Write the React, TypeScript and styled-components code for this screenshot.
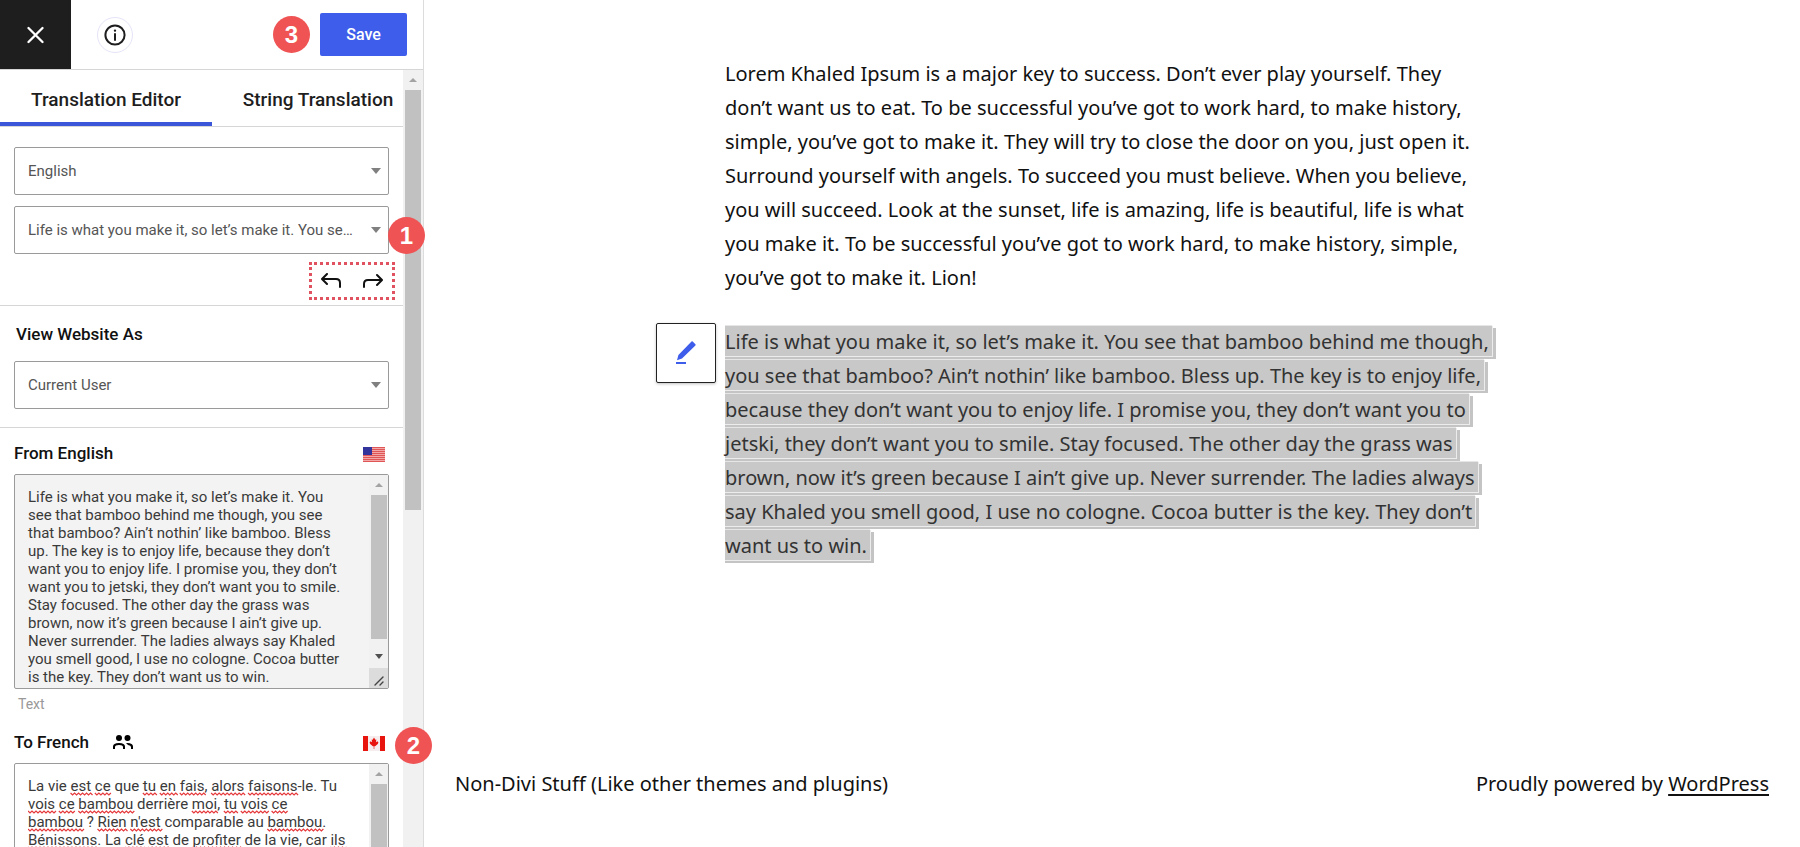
import React, { useLayoutEffect, useState } from "react";
import styled, { createGlobalStyle, css } from "styled-components";

const GlobalStyle = createGlobalStyle`
  *, *::before, *::after { box-sizing: border-box; }
  body { margin: 0; background: #fff; font-family: Roboto, "Liberation Sans", sans-serif; }
  button, select, textarea { font-family: inherit; }
`;

const Page = styled.div`
  display: flex;
  height: 100vh;
  overflow: hidden;
`;

/* ---------- sidebar ---------- */

const Sidebar = styled.aside`
  position: relative;
  flex: 0 0 424px;
  min-width: 0;
  display: flex;
  flex-direction: column;
  border-right: 1px solid #dcdcdc;
`;

const TopBar = styled.header`
  flex: none;
  display: flex;
  align-items: center;
  height: 70px;
  padding-right: 16px;
  border-bottom: 1px solid #d6d6d6;
`;

const CloseButton = styled.button`
  display: flex;
  align-items: center;
  justify-content: center;
  align-self: stretch;
  width: 71px;
  border: 0;
  background: #1e1e1e;
  color: #fff;
`;

const InfoButton = styled.button`
  display: flex;
  align-items: center;
  justify-content: center;
  width: 36px;
  height: 36px;
  margin: 0 auto 0 26px;
  padding: 0;
  border: 1px solid #e4e4f8;
  border-radius: 50%;
  background: #fff;
  color: #1e1e1e;
`;

const SaveButton = styled.button`
  width: 87px;
  height: 43px;
  border: 0;
  border-radius: 2px;
  background: #3e5dea;
  color: #fff;
  font-size: 16px;
  font-weight: 500;
`;

const Badge = styled.span`
  display: flex;
  align-items: center;
  justify-content: center;
  width: 37px;
  height: 37px;
  border-radius: 50%;
  background: #ef5354;
  color: #fff;
  font: 700 24px/1 "Liberation Sans", sans-serif;
`;

const SaveBadge = styled(Badge)`
  margin-right: 10px;
`;

const SelectBadge = styled(Badge)`
  position: absolute;
  left: 374px;
  top: 11px;
`;

const FieldBadge = styled(Badge)`
  position: absolute;
  left: 395px;
  top: 10px;
`;

const ScrollArea = styled.div`
  flex: 1;
  min-height: 0;
  display: flex;
`;

const Panel = styled.div`
  flex: 1;
  min-width: 0;
`;

const Tabs = styled.nav`
  display: flex;
  overflow: hidden;
  border-bottom: 1px solid #d6d6d6;
`;

const Tab = styled.button<{ $active?: boolean }>`
  flex: 0 0 212px;
  height: 56px;
  padding: 6px 0 0;
  border: 0;
  border-bottom: 4px solid ${(p) => (p.$active ? "#3b56d9" : "transparent")};
  background: none;
  color: #1e1e1e;
  font-size: 19px;
  font-weight: 500;
`;

const Section = styled.section<{ $roomy?: boolean }>`
  padding: 20px 14px ${(p) => (p.$roomy ? 7 : 0)}px;
  border-bottom: 1px solid #d6d6d6;
`;

const SelectRow = styled.div`
  position: relative;
  margin-bottom: 11px;
`;

const Select = styled.select`
  display: block;
  width: 100%;
  height: 48px;
  padding: 0 30px 0 13px;
  border: 1px solid #9a9a9a;
  border-radius: 2px;
  background: #fff;
  color: #555;
  font-size: 15px;
  text-overflow: ellipsis;
  appearance: none;
`;

const Caret = styled.span`
  position: absolute;
  right: 8px;
  top: 21px;
  border: 5px solid transparent;
  border-top: 6px solid #808080;
  border-bottom: 0;
  pointer-events: none;
`;

const HistoryRow = styled.div`
  display: flex;
  justify-content: space-between;
  align-items: center;
  width: 86px;
  height: 38px;
  margin: -3px -6px 5px auto;
  padding: 0 9px;
  border: 3px dotted #e0525f;
`;

const IconButton = styled.button`
  display: flex;
  padding: 0;
  border: 0;
  background: none;
  color: #111;
`;

const SectionLabel = styled.label`
  display: block;
  margin: 0 0 19px 2px;
  color: #111;
  font-size: 17px;
  font-weight: 500;
  line-height: 16px;
`;

const Field = styled.div`
  position: relative;
  padding: 12px 14px 0;
`;

const FieldHead = styled.div`
  display: flex;
  align-items: center;
  height: 25px;
  margin-bottom: 9px;
`;

const FieldLabel = styled.label`
  color: #111;
  font-size: 17px;
  font-weight: 500;
`;

const TextFrame = styled.div<{ $muted?: boolean }>`
  display: flex;
  height: 215px;
  border: 1px solid #9a9a9a;
  border-radius: 2px;
  background: ${(p) => (p.$muted ? "#f3f3f3" : "#fff")};
`;

const TextWrap = styled.div`
  position: relative;
  flex: 1;
`;

const TextArea = styled.textarea`
  display: block;
  width: 100%;
  height: 100%;
  padding: 13px 8px 0 13px;
  border: 0;
  background: transparent;
  color: #3a3a3a;
  font-size: 15px;
  line-height: 18px;
  resize: none;
  overflow: hidden;
  outline: 0;
`;

const Squiggles = styled.svg`
  position: absolute;
  left: 13px;
  top: 13px;
  pointer-events: none;
`;

const Hint = styled.p`
  margin: 6px 0 4px 4px;
  color: #999;
  font-size: 14px;
  line-height: 18px;
`;

const Bar = styled.div<{ $outer?: boolean }>`
  display: flex;
  flex-direction: column;
  align-items: center;
  flex: 0 0 ${(p) => (p.$outer ? 20 : 19)}px;
  background: #f1f1f1;
`;

const Arrow = styled.span<{ $down?: boolean }>`
  margin: ${(p) => (p.$down ? "auto 0 9px" : "8px 0")};
  border: 4px solid transparent;
  ${(p) =>
    p.$down
      ? css`
          border-top: 5px solid #505050;
          border-bottom: 0;
        `
      : css`
          border-bottom: 4px solid #a3a3a3;
          border-top: 0;
        `}
`;

const Thumb = styled.span<{ $share: string }>`
  width: 16px;
  height: ${(p) => p.$share};
  background: #c1c1c1;
`;

const Grip = styled.span`
  display: flex;
  align-items: flex-end;
  justify-content: center;
  width: 100%;
  height: 20px;
  background: #dcdcdc;
`;

const FlagSvg = styled.svg`
  margin: 4px 4px 0 auto;
`;

const PeopleSvg = styled.svg`
  margin-left: 23px;
`;

/* ---------- previewed page ---------- */

const Preview = styled.main`
  flex: 1;
  min-width: 0;
  display: flex;
  flex-direction: column;
  color: #111;
  font: 20px/34px "Noto Sans", "Open Sans", sans-serif;
`;

const Article = styled.article`
  width: 100%;
  max-width: 774px;
  margin: 0 auto;
  padding-top: 57px;
`;

const Paragraph = styled.p`
  position: relative;
  margin: 0 0 30px;
  white-space: nowrap;
`;

const Highlight = styled.span`
  padding: 3px 3px 1px 0;
  background: #c8c8c8;
  box-shadow: inset 0 1px #e6e6e6, 0 1px #ececec, 1px 1px #ececec, 0 3px #c4c4c4, 4px 3px #c4c4c4;
  color: #333;
  -webkit-box-decoration-break: clone;
  box-decoration-break: clone;
`;

const EditButton = styled.button`
  position: absolute;
  left: -69px;
  top: -2px;
  display: flex;
  align-items: center;
  justify-content: center;
  width: 60px;
  height: 60px;
  border: 1px solid #222;
  border-radius: 2px;
  background: #fff;
  box-shadow: 0 1px 3px rgba(0, 0, 0, 0.25);
  color: #3e5dea;
`;

const Footer = styled.footer`
  display: flex;
  justify-content: space-between;
  margin-top: 174px;
  padding: 0 31px;
`;

const FooterLink = styled.a`
  color: inherit;
  text-underline-offset: 3px;
`;

/* ---------- data ---------- */

const LOREM = [
  "Lorem Khaled Ipsum is a major key to success. Don’t ever play yourself. They",
  "don’t want us to eat. To be successful you’ve got to work hard, to make history,",
  "simple, you’ve got to make it. They will try to close the door on you, just open it.",
  "Surround yourself with angels. To succeed you must believe. When you believe,",
  "you will succeed. Look at the sunset, life is amazing, life is beautiful, life is what",
  "you make it. To be successful you’ve got to work hard, to make history, simple,",
  "you’ve got to make it. Lion!",
];

const SELECTED = [
  "Life is what you make it, so let’s make it. You see that bamboo behind me though,",
  "you see that bamboo? Ain’t nothin’ like bamboo. Bless up. The key is to enjoy life,",
  "because they don’t want you to enjoy life. I promise you, they don’t want you to",
  "jetski, they don’t want you to smile. Stay focused. The other day the grass was",
  "brown, now it’s green because I ain’t give up. Never surrender. The ladies always",
  "say Khaled you smell good, I use no cologne. Cocoa butter is the key. They don’t",
  "want us to win.",
];

const SOURCE = [
  "Life is what you make it, so let’s make it. You",
  "see that bamboo behind me though, you see",
  "that bamboo? Ain’t nothin’ like bamboo. Bless",
  "up. The key is to enjoy life, because they don’t",
  "want you to enjoy life. I promise you, they don’t",
  "want you to jetski, they don’t want you to smile.",
  "Stay focused. The other day the grass was",
  "brown, now it’s green because I ain’t give up.",
  "Never surrender. The ladies always say Khaled",
  "you smell good, I use no cologne. Cocoa butter",
  "is the key. They don’t want us to win.",
];

/* Words between asterisks are flagged by the spelling check. */
const FRENCH = [
  "La vie *est* *ce* que *tu* *en* *fais*, *alors* *faisons*-le. Tu",
  "*vois* *ce* *bambou* derrière *moi*, *tu* *vois* *ce*",
  "*bambou* ? *Rien* *n'est* comparable au *bambou*.",
  "*Bénissons*. La *clé* *est* de *profiter* de la vie, car *ils*",
];

const lines = (rows: string[]) =>
  rows.map((row, i) => (
    <React.Fragment key={i}>
      {i > 0 && <br />}
      {row}
    </React.Fragment>
  ));

/* ---------- icons ---------- */

const stroke = { fill: "none", stroke: "currentColor", strokeLinecap: "round", strokeLinejoin: "round" } as const;

const CloseIcon = () => (
  <svg width="18" height="18" viewBox="0 0 18 18" {...stroke} strokeWidth="2.3">
    <path d="M1.500 2l14 14M15.500 2l-14 14" />
  </svg>
);

const InfoIcon = () => (
  <svg width="22" height="22" viewBox="0 0 22 22" {...stroke} strokeWidth="2">
    <circle cx="11" cy="11" r="9.6" />
    <path d="M11 10v6" />
    <circle cx="11" cy="6.6" r="0.6" fill="currentColor" strokeWidth="1.2" />
  </svg>
);

const UndoIcon = () => (
  <svg width="20" height="16" viewBox="0 0 20 16" {...stroke} strokeWidth="2">
    <path d="M6 1L1 6l5 5M1.500 6H15q4 0 4 4v4" />
  </svg>
);

const RedoIcon = () => (
  <svg width="20" height="16" viewBox="0 0 20 16" {...stroke} strokeWidth="2">
    <path d="M14 2l5 5-5 5M18.500 7H5Q1 7 1 11v3" />
  </svg>
);

const PeopleIcon = () => (
  <PeopleSvg width="22" height="16" viewBox="0 0 22 16" fill="currentColor">
    <circle cx="7" cy="4" r="3" />
    <circle cx="15.500" cy="4" r="3" />
    <path d="M1 15v-2.500Q1 9 7 9t6 3.500V15h-2v-2q0-2-4-2t-4 2v2z" />
    <path d="M14 9q7-.4 7 3.500V15h-2v-2q0-1.600-3-2z" />
  </PeopleSvg>
);

const PencilIcon = () => (
  <svg width="22" height="24" viewBox="0 0 22 24" fill="currentColor">
    <path d="M16.500.6q.6-.6 1.200 0l2.700 2.700q.6.600 0 1.200L7 17.600 2 19.200 3.400 14z" />
    <rect x="1" y="21" width="10" height="2" />
  </svg>
);

const UsFlag = () => (
  <FlagSvg width="22" height="15" viewBox="0 0 22 15" role="img" aria-label="United States">
    <rect width="22" height="15" fill="#f3a8a8" />
    {[0, 2, 4, 6, 8, 10, 12, 14].map((y) => (
      <rect key={y} y={y} width="22" height="1" fill="#e05656" />
    ))}
    <rect width="9" height="8" fill="#33339c" />
  </FlagSvg>
);

const CanadaFlag = () => (
  <FlagSvg width="22" height="15" viewBox="0 0 22 15" role="img" aria-label="Canada">
    <rect width="22" height="15" fill="#f6eeee" />
    <rect width="5" height="15" fill="#e8150f" />
    <rect x="17" width="5" height="15" fill="#e8150f" />
    <path d="M11 1.500l1.300 2.300 1-.4-.3 2.900 1.500-1 .9 1.200-.6 1.400-2.700 2.300h-.8V13h-.6v-2.800h-.8L7.200 7.900l-.6-1.400.9-1.200 1.500 1-.3-2.900 1 .4z" fill="#e8150f" />
  </FlagSvg>
);

const GripIcon = () => (
  <svg width="12" height="14" viewBox="0 0 12 14" {...stroke} stroke="#444" strokeWidth="1.400">
    <path d="M2 11l8-8M7 11l3-3" />
  </svg>
);

/* ---------- parts ---------- */

function SelectField({ id, label, value }: { id: string; label?: string; value: string }) {
  return (
    <>
      <Select id={id} aria-label={label}>
        <option>{value}</option>
      </Select>
      <Caret />
    </>
  );
}

/* Builds one zigzag from x to x + width, along the bottom of a text line. */
function zigzag(x: number, width: number, y: number) {
  let d = `M${x} ${y}`;
  for (let i = 0; i * 2 < width; i++) d += `l2 ${i % 2 ? -2 : 2}`;
  return d;
}

/* Wavy spelling marks under the flagged words, measured in the field's font. */
function SpellingMarks({ rows }: { rows: string[] }) {
  const [path, setPath] = useState("");
  useLayoutEffect(() => {
    const ctx = document.createElement("canvas").getContext("2d");
    if (!ctx) return;
    ctx.font = '15px Roboto, "Liberation Sans", sans-serif';
    let d = "";
    rows.forEach((row, line) => {
      let before = "";
      row.split("*").forEach((part, i) => {
        if (i % 2) d += zigzag(ctx.measureText(before).width, ctx.measureText(part).width, line * 18 + 16);
        before += part;
      });
    });
    setPath(d);
  }, [rows]);
  return (
    <Squiggles width="335" height="76" aria-hidden="true">
      <path d={path} fill="none" stroke="#e5393b" strokeWidth="1.200" />
    </Squiggles>
  );
}

export default function App() {
  return (
    <Page>
      <GlobalStyle />
      <Sidebar>
        <TopBar>
          <CloseButton aria-label="Close">
            <CloseIcon />
          </CloseButton>
          <InfoButton aria-label="Information">
            <InfoIcon />
          </InfoButton>
          <SaveBadge>3</SaveBadge>
          <SaveButton>Save</SaveButton>
        </TopBar>
        <ScrollArea>
          <Panel>
            <Tabs>
              <Tab $active>Translation Editor</Tab>
              <Tab>String Translation</Tab>
            </Tabs>

            <Section>
              <SelectRow>
                <SelectField id="language" label="Language" value="English" />
              </SelectRow>
              <SelectRow>
                <SelectField id="string" label="String" value={SOURCE.join(" ")} />
                <SelectBadge>1</SelectBadge>
              </SelectRow>
              <HistoryRow>
                <IconButton aria-label="Previous">
                  <UndoIcon />
                </IconButton>
                <IconButton aria-label="Next">
                  <RedoIcon />
                </IconButton>
              </HistoryRow>
            </Section>

            <Section $roomy>
              <SectionLabel htmlFor="viewer">View Website As</SectionLabel>
              <SelectRow>
                <SelectField id="viewer" value="Current User" />
              </SelectRow>
            </Section>

            <Field>
              <FieldHead>
                <FieldLabel htmlFor="source">From English</FieldLabel>
                <UsFlag />
              </FieldHead>
              <TextFrame $muted>
                <TextWrap>
                  <TextArea id="source" readOnly value={SOURCE.join("\n")} />
                </TextWrap>
                <Bar>
                  <Arrow />
                  <Thumb $share="144px" />
                  <Arrow $down />
                  <Grip>
                    <GripIcon />
                  </Grip>
                </Bar>
              </TextFrame>
              <Hint>Text</Hint>
            </Field>

            <Field>
              <FieldBadge>2</FieldBadge>
              <FieldHead>
                <FieldLabel htmlFor="target">To French</FieldLabel>
                <PeopleIcon />
                <CanadaFlag />
              </FieldHead>
              <TextFrame>
                <TextWrap>
                  <TextArea
                    id="target"
                    spellCheck={false}
                    defaultValue={FRENCH.join("\n").replace(/\*/g, "")}
                  />
                  <SpellingMarks rows={FRENCH} />
                </TextWrap>
                <Bar>
                  <Arrow />
                  <Thumb $share="144px" />
                </Bar>
              </TextFrame>
            </Field>
          </Panel>
          <Bar $outer>
            <Arrow />
            <Thumb $share="54%" />
          </Bar>
        </ScrollArea>
      </Sidebar>

      <Preview>
        <Article>
          <Paragraph>{lines(LOREM)}</Paragraph>
          <Paragraph>
            <EditButton aria-label="Edit text">
              <PencilIcon />
            </EditButton>
            <Highlight>{lines(SELECTED)}</Highlight>
          </Paragraph>
        </Article>
        <Footer>
          <span>Non-Divi Stuff (Like other themes and plugins)</span>
          <span>
            Proudly powered by <FooterLink href="#">WordPress</FooterLink>
          </span>
        </Footer>
      </Preview>
    </Page>
  );
}
